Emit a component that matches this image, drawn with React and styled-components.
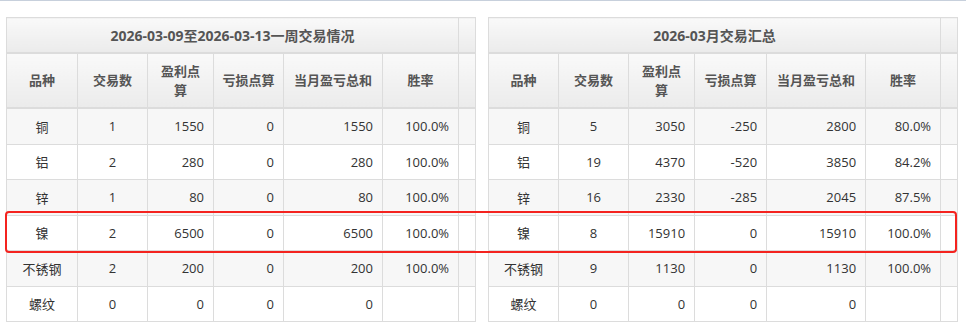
import React from 'react'
import styled, { createGlobalStyle } from 'styled-components'

const GlobalStyle = createGlobalStyle`
  html, body {
    margin: 0;
    padding: 0;
    background: #fff;
  }
  body {
    font-family: "Open Sans", "Noto Sans CJK SC", sans-serif;
  }
`

const Page = styled.div`
  border-top: 1px solid #c7d0dc;
  padding: 16px 0 0 6px;
`

const Board = styled.div`
  position: relative;
  display: flex;
  gap: 12px;
  align-items: flex-start;
`

const Table = styled.table`
  width: 469px;
  table-layout: fixed;
  border-collapse: collapse;
  border: 1px solid #dcdcdc;
  font-size: 13px;
  color: #333;
`

const HeadCell = styled.th`
  height: ${props => props.tall ? 53 : 34}px;
  padding: 0 7px;
  border: 1px solid #dcdcdc;
  border-bottom: 2px solid #dcdcdc;
  background: linear-gradient(to bottom, #f9f9f9, #ebebeb);
  color: #555;
  font-weight: bold;
  font-size: ${props => props.tall ? 13 : 14}px;
  line-height: 19px;
  text-align: center;
`

const Row = styled.tr`
  background: ${props => props.odd ? '#f7f7f7' : '#fff'};
`

const Cell = styled.td`
  height: 34.5px;
  padding: 0 9px;
  border: 1px solid #dcdcdc;
  text-align: ${props => props.align || 'right'};
  white-space: nowrap;
`

const Highlight = styled.div`
  position: absolute;
  left: -1px;
  top: 194px;
  width: 948px;
  height: 38px;
  border: 2px solid #f4231f;
  border-radius: 4px;
  pointer-events: none;
`

const weekRows = [
  ['铜', 1, 1550, 0, 1550, '100.0%'],
  ['铝', 2, 280, 0, 280, '100.0%'],
  ['锌', 1, 80, 0, 80, '100.0%'],
  ['镍', 2, 6500, 0, 6500, '100.0%'],
  ['不锈钢', 2, 200, 0, 200, '100.0%'],
  ['螺纹', 0, 0, 0, 0, ''],
]

const monthRows = [
  ['铜', 5, 3050, -250, 2800, '80.0%'],
  ['铝', 19, 4370, -520, 3850, '84.2%'],
  ['锌', 16, 2330, -285, 2045, '87.5%'],
  ['镍', 8, 15910, 0, 15910, '100.0%'],
  ['不锈钢', 9, 1130, 0, 1130, '100.0%'],
  ['螺纹', 0, 0, 0, 0, ''],
]

const weekCols = [71, 70, 66, 70, 99, 76, 17]
const monthCols = [70, 70, 66, 72, 99, 75, 17]

function TradeTable({ title, cols, rows }) {
  return (
    <Table>
      <colgroup>
        {cols.map((w, i) => <col key={i} style={{ width: w }} />)}
      </colgroup>
      <thead>
        <tr>
          <HeadCell colSpan={6}>{title}</HeadCell>
          <HeadCell />
        </tr>
        <tr>
          <HeadCell tall>品种</HeadCell>
          <HeadCell tall>交易数</HeadCell>
          <HeadCell tall>盈利点算</HeadCell>
          <HeadCell tall>亏损点算</HeadCell>
          <HeadCell tall>当月盈亏总和</HeadCell>
          <HeadCell tall>胜率</HeadCell>
          <HeadCell tall />
        </tr>
      </thead>
      <tbody>
        {rows.map((r, i) => (
          <Row key={r[0]} odd={i % 2 === 0}>
            <Cell align="center">{r[0]}</Cell>
            <Cell align="center">{r[1]}</Cell>
            <Cell>{r[2]}</Cell>
            <Cell>{r[3]}</Cell>
            <Cell>{r[4]}</Cell>
            <Cell>{r[5]}</Cell>
            <Cell />
          </Row>
        ))}
      </tbody>
    </Table>
  )
}

function App() {
  return (
    <Page>
      <GlobalStyle />
      <Board>
        <TradeTable title="2026-03-09至2026-03-13一周交易情况" cols={weekCols} rows={weekRows} />
        <TradeTable title="2026-03月交易汇总" cols={monthCols} rows={monthRows} />
        <Highlight />
      </Board>
    </Page>
  )
}

export default App
